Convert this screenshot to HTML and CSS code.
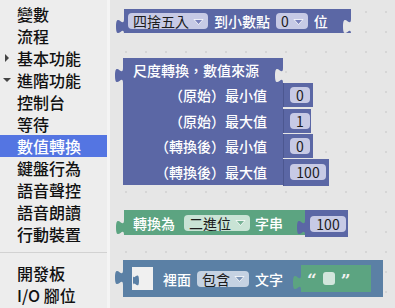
FILE: index.html
```html
<!DOCTYPE html>
<html lang="zh-TW">
<head>
    <meta charset="UTF-8">
    <title>數值轉換</title>
    <link rel="stylesheet" href="styles.css">
</head>
<body>
<div class="app">
    <nav class="sidebar">
        <div class="cat">變數</div>
        <div class="cat">流程</div>
        <div class="cat closed">基本功能</div>
        <div class="cat opened">進階功能</div>
        <div class="cat">控制台</div>
        <div class="cat">等待</div>
        <div class="cat selected">數值轉換</div>
        <div class="cat">鍵盤行為</div>
        <div class="cat">語音聲控</div>
        <div class="cat">語音朗讀</div>
        <div class="cat">行動裝置</div>
        <div class="sep"></div>
        <div class="cat">開發板</div>
        <div class="cat">I/O 腳位</div>
    </nav>

    <main class="workspace">
        <!-- 四捨五入 -->
        <div class="block math round-block">
            <svg class="tab" viewBox="0 0 8 20"><path d="M8,0 V5 C8,15 0,-3 0,12.5 S8,10 8,20 Z"/></svg>
            <span class="field">四捨五入<svg class="arrow" viewBox="0 0 13 13"><path d="M2,4.5 H11 L6.5,9.5 Z"/></svg></span>
            <span class="label">到小數點</span>
            <span class="field">0<svg class="arrow" viewBox="0 0 13 13"><path d="M2,4.5 H11 L6.5,9.5 Z"/></svg></span>
            <span class="label">位</span>
            <svg class="notch" viewBox="0 0 8 20"><path d="M8,0 V5 C8,15 0,-3 0,12.5 S8,10 8,20 Z"/></svg>
        </div>

        <!-- 尺度轉換 -->
        <div class="scale-block">
            <div class="head math">
                <svg class="tab" viewBox="0 0 8 20"><path d="M8,0 V5 C8,15 0,-3 0,12.5 S8,10 8,20 Z"/></svg>
                <span class="label">尺度轉換，數值來源</span>
                <svg class="notch" viewBox="0 0 8 20"><path d="M8,0 V5 C8,15 0,-3 0,12.5 S8,10 8,20 Z"/></svg>
            </div>
            <div class="row r1">
                <div class="lbl math">（原始）最小值</div>
                <div class="val math"><span class="field num">0</span></div>
            </div>
            <div class="row r2">
                <div class="lbl math">（原始）最大值</div>
                <div class="val math"><span class="field num">1</span></div>
            </div>
            <div class="row r3">
                <div class="lbl math">（轉換後）最小值</div>
                <div class="val math"><span class="field num">0</span></div>
            </div>
            <div class="row r4">
                <div class="lbl math">（轉換後）最大值</div>
                <div class="val math"><span class="field num wide">100</span></div>
            </div>
        </div>

        <!-- 轉換為二進位 -->
        <div class="chain binary-chain">
            <div class="block green to-binary">
                <svg class="tab" viewBox="0 0 8 20"><path d="M8,0 V5 C8,15 0,-3 0,12.5 S8,10 8,20 Z"/></svg>
                <span class="label">轉換為</span>
                <span class="field">二進位<svg class="arrow" viewBox="0 0 13 13"><path d="M2,4.5 H11 L6.5,9.5 Z"/></svg></span>
                <span class="label">字串</span>
            </div>
            <div class="block math plug">
                <svg class="tab" viewBox="0 0 8 20"><path d="M8,0 V5 C8,15 0,-3 0,12.5 S8,10 8,20 Z"/></svg>
                <span class="field num wide">100</span>
            </div>
        </div>

        <!-- 裡面包含文字 -->
        <div class="block logic contains">
            <svg class="tab" viewBox="0 0 8 20"><path d="M8,0 V5 C8,15 0,-3 0,12.5 S8,10 8,20 Z"/></svg>
            <span class="socket"><svg class="socket-tab" viewBox="0 0 8 20"><path d="M0,0 V5 C0,15 8,-3 8,12.5 S0,10 0,20 Z"/></svg></span>
            <span class="label">裡面</span>
            <span class="field">包含<svg class="arrow" viewBox="0 0 13 13"><path d="M2,4.5 H11 L6.5,9.5 Z"/></svg></span>
            <span class="label">文字</span>
            <div class="block green text-plug">
                <svg class="tab" viewBox="0 0 8 20"><path d="M8,0 V5 C8,15 0,-3 0,12.5 S8,10 8,20 Z"/></svg>
                <span class="quote">“</span>
                <span class="blank"></span>
                <span class="quote">”</span>
            </div>
        </div>
    </main>
</div>
</body>
</html>
```

FILE: styles.css
```css
body {
    margin: 0;
    font-family: "Noto Sans CJK TC", "Noto Sans", sans-serif;
    background-color: #e6e6e6;
}
.app {
    display: flex;
    width: 395px;
    height: 308px;
    overflow: hidden;
}

/* 左側分類 */
.sidebar {
    width: 107px;
    flex-shrink: 0;
    background-color: #ededed;
    border-right: 3px solid #f4f4f4;
    padding-top: 3px;
}
.cat {
    position: relative;
    height: 22px;
    line-height: 22px;
    padding-left: 17px;
    font-size: 16px;
    font-weight: 500;
    color: #111;
}
.cat.selected {
    background-color: #5475e2;
    color: #fff;
}
.cat.closed::before {
    content: '';
    position: absolute;
    left: 5px;
    top: 7px;
    border-left: 4px solid #444;
    border-top: 4px solid transparent;
    border-bottom: 4px solid transparent;
}
.cat.opened::before {
    content: '';
    position: absolute;
    left: 3px;
    top: 9px;
    border-top: 4px solid #444;
    border-left: 4px solid transparent;
    border-right: 4px solid transparent;
}
.sep {
    height: 1px;
    background-color: #d2d2d2;
    margin: 7px 0 9px;
}

/* 工作區 */
.workspace {
    position: relative;
    flex: 1;
    background-color: #e6e6e6;
    background-image: radial-gradient(#d6d6d6 0.8px, transparent 1.2px);
    background-size: 20px 20px;
    background-position: 6px 2px;
}
.math { background-color: #5b67a5; }
.green { background-color: #5ca481; }
.logic { background-color: #5b80a5; }

.block {
    position: absolute;
    display: flex;
    align-items: center;
    gap: 6px;
    height: 24px;
    color: #fff;
    font-size: 14px;
    font-weight: 500;
    box-sizing: border-box;
}
.tab {
    position: absolute;
    left: -8px;
    top: 5px;
    width: 8px;
    height: 20px;
}
.math .tab, .math > .tab { fill: #5b67a5; }
.green > .tab { fill: #5ca481; }
.logic > .tab { fill: #5b80a5; }
.notch {
    position: absolute;
    right: 0;
    top: 5px;
    width: 8px;
    height: 20px;
    fill: #e6e6e6;
}
.label {
    white-space: nowrap;
}
.field {
    display: flex;
    align-items: center;
    gap: 3px;
    height: 16px;
    line-height: 16px;
    padding: 0 3px 0 5px;
    border-radius: 4px;
    color: #1c1c1c;
    font-size: 14px;
    font-weight: 400;
    white-space: nowrap;
}
.math .field { background-color: #c7cae5; }
.green .field { background-color: #c9e3d5; }
.logic .field { background-color: #c5d2e2; }
.arrow {
    width: 13px;
    height: 13px;
    fill: #7a82bc;
    stroke: #fff;
    stroke-width: 0.8;
}
.green .arrow { fill: #78b396; }
.logic .arrow { fill: #7d96b8; }
.field.num {
    justify-content: center;
    width: 20px;
    padding: 0;
}
.field.num.wide {
    width: 36px;
}

.round-block {
    left: 14px;
    top: 9px;
    width: 227px;
    padding-left: 4px;
}

/* 尺度轉換 */
.scale-block {
    position: absolute;
    left: 13px;
    top: 58px;
    display: flex;
    flex-direction: column;
    color: #fff;
    font-size: 14px;
    font-weight: 500;
}
.scale-block .head {
    position: relative;
    display: flex;
    align-items: center;
    width: 160px;
    height: 24px;
    padding-left: 10px;
    box-sizing: border-box;
}
.scale-block .row {
    display: flex;
    align-items: center;
    height: 26px;
}
.scale-block .row.r2 { height: 25px; }
.scale-block .lbl {
    display: flex;
    align-items: center;
    justify-content: flex-end;
    width: 160px;
    height: 100%;
    padding-right: 16px;
    box-sizing: border-box;
    white-space: nowrap;
}
.scale-block .val {
    display: flex;
    align-items: center;
    height: 24px;
    padding: 0 3px 0 6px;
    border-left: 1px solid #4c5790;
}
.scale-block .r2 .val { padding-right: 1px; }
.scale-block .r4 .val { height: 27px; }

/* 轉換為二進位 */
.binary-chain {
    position: absolute;
    left: 14px;
    top: 210px;
    display: flex;
}
.binary-chain .block {
    position: relative;
}
.to-binary {
    width: 181px;
    height: 25px;
    padding-left: 9px;
    gap: 9px;
}
.to-binary .field { margin-right: -4px; }
.plug {
    height: 27px;
    width: 43px;
    padding-left: 5px;
}

/* 裡面包含文字 */
.contains {
    left: 13px;
    top: 260px;
    width: 260px;
    height: 37px;
    padding-left: 9px;
    gap: 6px;
}
.socket {
    position: relative;
    width: 21px;
    height: 23px;
    background-color: #f0f0f0;
    margin-right: 4px;
}
.socket-tab {
    position: absolute;
    left: 0;
    top: 4px;
    width: 8px;
    height: 15px;
    fill: #5b80a5;
}
.contains .text-plug {
    position: relative;
    width: 70px;
    height: 27px;
    margin-left: 12px;
    padding-left: 6px;
    gap: 6px;
}
.quote {
    font-family: "DejaVu Serif", serif;
    font-size: 17px;
    font-weight: bold;
    color: #f2f2f2;
    line-height: 1;
    margin-top: 3px;
}
.blank {
    width: 12px;
    height: 13px;
    border-radius: 3px;
    background-color: #d3e6dc;
}
```
